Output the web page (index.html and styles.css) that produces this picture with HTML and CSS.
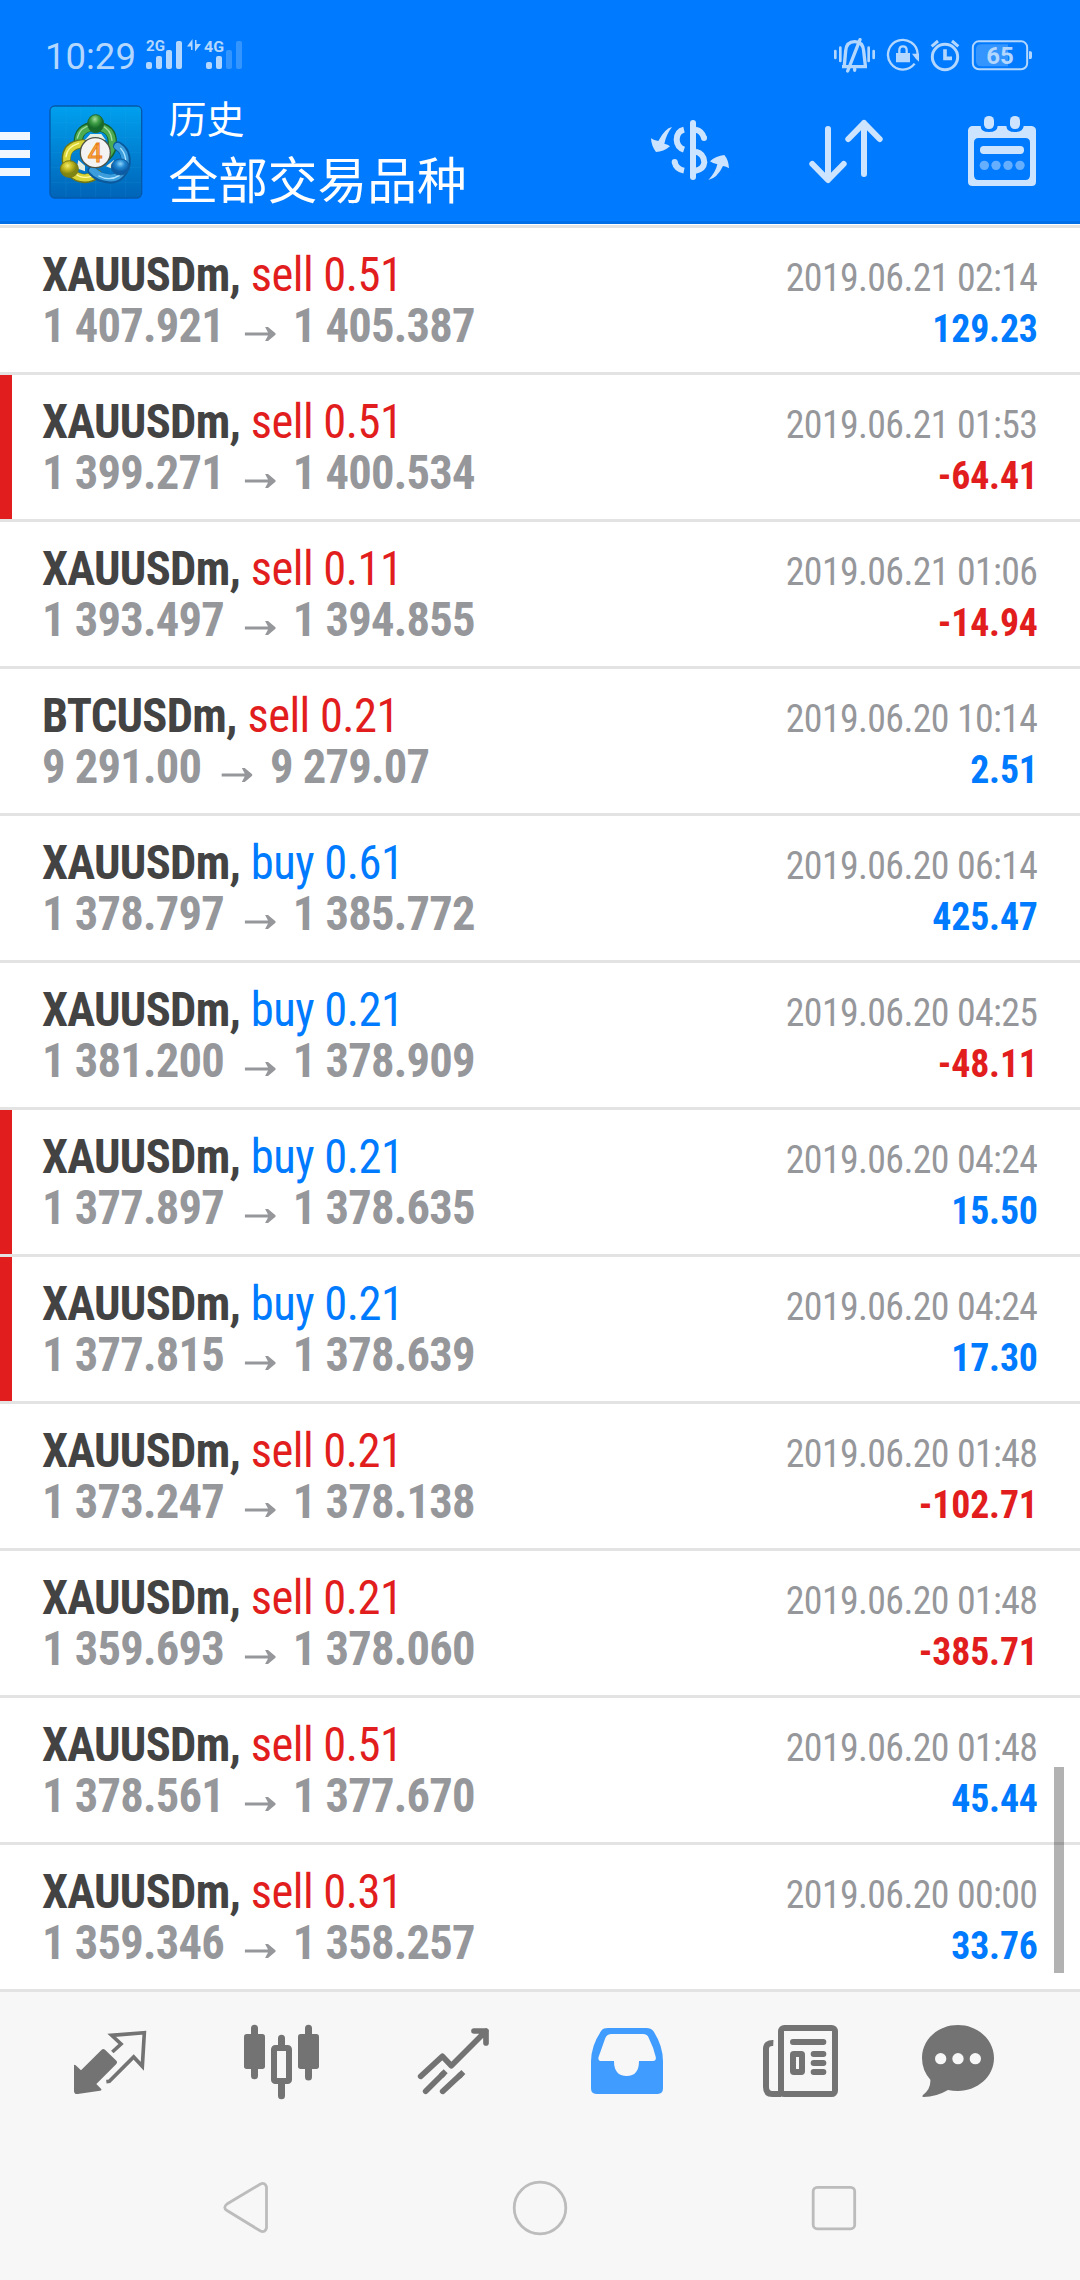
FILE: index.html
```html
<!DOCTYPE html>
<html lang="zh-CN">
<head>
<meta charset="utf-8">
<title>历史</title>
<link rel="stylesheet" href="styles.css">
</head>
<body>
<header class="header">
  <div class="status">
    <span class="clock">10:29</span>
    <svg class="signal" width="100" height="34" viewBox="144 38 100 34">
      <g fill="#b3d7ff">
        <text class="net" x="146" y="51" textLength="19" lengthAdjust="spacingAndGlyphs">2G</text>
        <text class="net" x="204" y="52" textLength="20" lengthAdjust="spacingAndGlyphs">4G</text>
        <rect x="146" y="62" width="6" height="7" rx="2"/><rect x="156" y="56" width="6" height="13" rx="2"/>
        <rect x="166" y="50" width="6" height="19" rx="2"/><rect x="176" y="41" width="6" height="28" rx="2"/>
        <path d="M187 46.500L192.500 39V50H191V46.500zM195 40H196.500V44H201L195 51.500z"/>
        <rect x="206" y="62" width="6" height="7" rx="2"/><rect x="216" y="56" width="6" height="13" rx="2"/>
      </g>
      <g fill="#3595ff"><rect x="226" y="50" width="6" height="19" rx="2"/><rect x="236" y="41" width="6" height="28" rx="2"/></g>
    </svg>
    <svg class="tray" width="200" height="36" viewBox="699 50 600 108">
      <g fill="none" stroke="#b3d7ff" stroke-width="8" stroke-linecap="round">
        <path d="M706 92v21M721 82v40M806 82v40M821 92v21"/>
        <path d="M726 139H801M733 136L737 92Q739 64 764 64Q789 64 791 92L796 136" stroke-width="10" stroke-linecap="butt"/>
        <path d="M780 58L743 152M764 145v5" stroke-width="10"/>
        <path d="M944 130A44.500 44.500 0 1 1 953 102" stroke-width="7" stroke-linecap="butt"/>
        <path d="M898 102V90Q898 78 909 78Q920 78 920 90V102" stroke-width="7"/>
        <circle cx="1035" cy="110" r="38" stroke-width="9"/>
        <path d="M1035 87V114H1056" stroke-width="11" stroke-linecap="butt"/>
        <path d="M995 78L1014 62M1075 78L1056 62" stroke-width="9" stroke-linecap="butt"/>
        <rect x="1118.500" y="63" width="163" height="84" rx="18" stroke-width="6"/>
      </g>
      <path d="M888 98H930V126H888zM936 100H957V124L948 116z" fill="#b3d7ff"/>
      <path d="M1144 72H1224V138H1144Q1128 138 1128 122V88Q1128 72 1144 72z" fill="#3595ff"/>
      <path d="M1287 93h5q4 0 4 5v12q0 6 -4 6h-5z" fill="#b3d7ff"/>
      <text class="battery" x="1159" y="132" textLength="82">65</text>
    </svg>
  </div>
  <div class="toolbar">
    <svg class="menu" width="30" height="44" viewBox="0 0 30 44"><path d="M0 0H30V8H0zM0 18H30V26H0zM0 36H30V44H0z" fill="#f0f7ff"/></svg>
    <svg class="logo" width="94" height="94" viewBox="57 45 282 282">
      <defs>
        <linearGradient id="tile" x1="0" y1="0" x2="0" y2="1"><stop offset="0" stop-color="#00a0ef"/><stop offset="1" stop-color="#0064b8"/></linearGradient>
        <radialGradient id="green" cx=".45" cy=".25"><stop offset="0" stop-color="#a5dda0"/><stop offset=".5" stop-color="#3fa047"/><stop offset="1" stop-color="#166b2a"/></radialGradient>
        <radialGradient id="gold" cx=".4" cy=".3"><stop offset="0" stop-color="#f3ee70"/><stop offset=".5" stop-color="#c4b920"/><stop offset="1" stop-color="#7e8513"/></radialGradient>
        <radialGradient id="azure" cx=".5" cy=".3"><stop offset="0" stop-color="#8ed4fa"/><stop offset=".5" stop-color="#2388d2"/><stop offset="1" stop-color="#0b5ba5"/></radialGradient>
      </defs>
      <rect x="60" y="48" width="275" height="276" rx="14" fill="url(#tile)" stroke="#0559a9" stroke-width="4"/>
      <path d="M108 50V322M152 50V322M197 50V322M242 50V322M287 50V322M62 98H333M62 142H333M62 187H333M62 232H333M62 277H333" stroke="#42b5ee" stroke-opacity=".17" stroke-width="2"/>
      <g fill="none" stroke-linecap="round">
        <path d="M145 160Q143 112 195 108Q249 112 247 159Q248 184 230 199" stroke="#17652b" stroke-width="28"/>
        <path d="M145 158Q144 114 195 110Q247 112 247 159Q247 182 230 197" stroke="#4caa50" stroke-width="21"/>
        <path d="M142 144Q151 109 186 106M213 106Q243 117 246 151" stroke="#a4dba0" stroke-width="4"/>
        <path d="M159 162Q105 164 109 213Q118 262 164 266Q184 264 202 252" stroke="#6e7616" stroke-width="28"/>
        <path d="M159 161Q107 166 110 213Q119 261 164 264Q184 263 200 252" stroke="#d9d435" stroke-width="21"/>
        <path d="M146 160Q111 170 108 200M132 248Q156 269 184 259" stroke="#fffaa0" stroke-width="4"/>
        <path d="M263 168Q291 182 288 222Q276 266 241 267Q205 265 186 242" stroke="#0a599d" stroke-width="28"/>
        <path d="M263 169Q288 184 286 222Q274 264 241 264Q205 261 188 241" stroke="#3b9ddb" stroke-width="21"/>
        <path d="M272 175Q290 196 286 216M207 258Q238 275 269 256" stroke="#afe4ff" stroke-width="4"/>
      </g>
      <path d="M181 132H214L227 150H165zM145 210L165 227V244L140 235zM228 229L252 210L256 240z" fill="#e5eee2"/>
      <ellipse cx="197" cy="101" rx="24" ry="27" fill="url(#green)" stroke="#25672c" stroke-width="3"/>
      <ellipse cx="118" cy="237" rx="27" ry="25" fill="url(#gold)" stroke="#78791a" stroke-width="3"/>
      <ellipse cx="271" cy="231" rx="27" ry="24" fill="url(#azure)" stroke="#155d9b" stroke-width="3"/>
      <circle cx="196" cy="188" r="45" fill="#f3f3f3" stroke="#4c5447" stroke-width="4"/>
      <text class="four" x="195" y="215">4</text>
    </svg>
    <div class="titles">
      <div class="title">历史</div>
      <div class="subtitle">全部交易品种</div>
    </div>
    <div class="actions">
      <svg width="80" height="80" viewBox="150 270 240 240" fill="#cce4ff">
        <path d="M216 321Q195 325 175 363Q162 362 153 355Q154 378 168 396Q190 396 210 379Q204 373 193 371Q199 343 216 321zM325 480Q347 457 352 433Q341 432 330 424Q348 407 373 405Q386 420 387 445Q379 439 369 438Q352 474 325 480z"/>
        <path d="M279 309V471" stroke="#cce4ff" stroke-width="18" stroke-linecap="round"/>
        <path d="M252 329Q231 334 230 359Q231 382 252 389M224 426Q228 447 252 452M287 329Q306 333 312 354M287 395Q312 401 313 427Q311 448 287 452" fill="none" stroke="#cce4ff" stroke-width="18"/>
        <circle cx="224" cy="426" r="9"/><circle cx="312" cy="354" r="9"/>
      </svg>
      <svg width="80" height="80" viewBox="618 270 240 240" fill="none" stroke="#cce4ff" stroke-width="18" stroke-linecap="round" stroke-linejoin="round">
        <path d="M684 327V479M637 432L684 480L731 432M792 462V309M745 357L792 309L839 357"/>
      </svg>
      <svg width="80" height="80" viewBox="1086 270 240 240">
        <path fill="#cce4ff" fill-rule="evenodd" d="M1116 318H1142Q1142 336 1167 336Q1192 336 1193 318H1219Q1220 336 1244 336Q1270 336 1271 318H1295Q1308 320 1308 331V485Q1308 498 1295 498H1118Q1104 498 1104 485V331Q1105 320 1116 318zM1136 354Q1122 354 1122 368V465Q1122 480 1136 480H1276Q1290 480 1290 465V368Q1290 354 1276 354z"/>
        <g fill="#cce4ff"><rect x="1152" y="288" width="30" height="39" rx="14"/><rect x="1230" y="288" width="30" height="39" rx="14"/><rect x="1140" y="378" width="132" height="24" rx="11"/></g>
        <g fill="#66afff"><circle cx="1153" cy="436" r="14"/><circle cx="1188" cy="436" r="14"/><circle cx="1224" cy="436" r="14"/><circle cx="1260" cy="436" r="14"/></g>
      </svg>
    </div>
  </div>
</header>
<main class="list" id="list"></main>
<nav class="tabs">
  <svg viewBox="90 120 240 240" fill="#737373">
    <path d="M102 257Q102 252 107 256L123 271L185 209Q190 205 195 209L230 243Q233 248 229 252L169 312L183 326Q187 331 180 332L113 342Q102 343 102 332z"/>
    <path d="M217 216L243 192L215 166L313 158L307 259L281 231L208 304L199 305" fill="none" stroke="#737373" stroke-width="11"/>
  </svg>
  <svg viewBox="606 120 240 240" fill="#737373">
    <path d="M643.500 145V287M805.500 145V291M724.500 175V200M724.500 305V347" stroke="#737373" stroke-width="21" stroke-linecap="round"/>
    <rect x="612" y="162" width="63" height="105" rx="8"/><rect x="774" y="162" width="63" height="105" rx="8"/>
    <rect x="702" y="204" width="45" height="99" rx="4" fill="#f7f7f7" stroke="#737373" stroke-width="18"/>
  </svg>
  <svg viewBox="1122 120 240 240" fill="none" stroke="#737373" stroke-width="17" stroke-linecap="round" stroke-linejoin="round">
    <path d="M1142 289L1207 229L1234 257L1338 153M1302 153H1338V189"/>
    <path d="M1157 334L1209 282M1208 334L1262 284"/>
    <path d="M1209 282l2 -2M1262 284l2 -2" stroke-linecap="square"/>
  </svg>
  <svg viewBox="138 120 240 240">
    <path fill="#409cff" fill-rule="evenodd" d="M204 144H319Q333 144 340 153Q369 197 369 244V325Q369 342 353 342H169Q153 342 153 325V244Q154 194 185 151Q190 144 204 144zM215 162Q201 162 196 174L176 230Q172 243 185 243H222Q222 288 260 288Q297 288 297 243H339Q350 242 347 230Q341 203 326 173Q322 162 309 162z"/>
  </svg>
  <svg viewBox="654 120 240 240" fill="none" stroke="#737373" stroke-width="18">
    <rect x="723" y="144" width="162" height="198" rx="10"/>
    <path d="M700 189Q678 188 678 207V321Q678 342 697 342H724"/>
    <path d="M759 186H850M821 222H850M821 249H850M821 276H850" stroke-linecap="round"/>
    <rect x="759" y="222" width="27" height="54" rx="2"/>
  </svg>
  <svg class="chat" viewBox="1128 120 240 240">
    <path fill="#737373" d="M1254 135C1312 135 1362 178 1362 234S1312 333 1254 333Q1238 333 1224 330Q1188 351 1151 351Q1144 350 1149 345Q1173 327 1171 299Q1146 271 1146 234C1146 178 1194 135 1254 135z"/>
    <g fill="#f7f7f7"><circle cx="1202" cy="236" r="17"/><circle cx="1254" cy="236" r="17"/><circle cx="1306" cy="236" r="17"/></g>
  </svg>
</nav>
<footer class="sysnav">
  <svg viewBox="216 2178 60 60"><path d="M266.500 2187V2228Q265 2233 260.500 2231L227 2210.500Q222.500 2207.500 227 2204L260.500 2184Q265 2182 266.500 2187z"/></svg>
  <svg viewBox="510 2178 60 60"><circle cx="540" cy="2208" r="25.800"/></svg>
  <svg viewBox="804 2178 60 60"><rect x="813.200" y="2187.300" width="41.500" height="41.500" rx="4"/></svg>
</footer>
<script src="app.js"></script>
</body>
</html>
```
FILE: styles.css
```css
* { box-sizing: border-box; }

body {
  margin: 0;
  width: 1080px;
  height: 2280px;
  display: flex;
  flex-direction: column;
  background: #f7f7f7;
  font-family: "Roboto Condensed", Roboto, "Noto Sans CJK SC", sans-serif;
  overflow: hidden;
}

svg { display: block; flex: none; }

.header {
  height: 224px;
  background: #007aff;
  border-bottom: 3px solid #006ee6;
}

.status {
  height: 96px;
  padding: 38px 47px 0 45px;
  display: flex;
  align-items: flex-start;
}

.clock {
  width: 99px;
  padding-top: 1px;
  font: 450 36.500px/36px Roboto, sans-serif;
  color: #b3d7ff;
}

.tray { margin-left: auto; margin-top: -1px; }
.net { font: bold 15px Roboto, sans-serif; }
.battery { font: bold 72px Roboto, sans-serif; fill: #b3d7ff; }

.toolbar {
  height: 125px;
  display: flex;
  align-items: flex-start;
  padding-right: 38px;
}

.menu { margin-top: 36px; }
.logo { margin: 9px 0 0 19px; }
.four { font: 78px Roboto, sans-serif; fill: #ffb04a; stroke: #e8801c; stroke-width: 3; text-anchor: middle; }

.titles {
  margin: -3px 0 0 25.500px;
  color: #fff;
  font-family: "Noto Sans CJK SC", sans-serif;
  font-weight: 400;
  white-space: nowrap;
}

.title { font-size: 38px; line-height: 48px; }
.subtitle { font-size: 49.700px; line-height: 72px; }

.actions { display: flex; gap: 76px; margin: 14px 0 0 auto; }

.list {
  height: 1767px;
  border-top: 3px solid #e3e3e3;
  margin-top: 1px;
  box-shadow: 0 -1px #fff;
  background: #fff;
  position: relative;
}

.list::after {
  content: "";
  position: absolute;
  right: 16px;
  top: 1539px;
  width: 10px;
  height: 206px;
  background: rgba(0, 0, 0, .3);
}

.deal {
  height: 147px;
  padding: 21px 42px 0 41.500px;
  border-bottom: 3px solid #e3e3e3;
  display: flex;
  justify-content: space-between;
  font-size: 48px;
  line-height: 51px;
  font-stretch: 75%;
  white-space: nowrap;
}

.deal.flagged { box-shadow: inset 12px 0 #e21d1d; }
.main { transform: scaleX(.97); transform-origin: left; }
.name { color: #434343; font-weight: 700; letter-spacing: -.750px; }
.sell, .buy { letter-spacing: -.550px; }
.sell, .loss { color: #e21d1d; }
.buy, .gain { color: #007aff; }
.prices { display: flex; font-weight: 700; letter-spacing: -.800px; color: #96979b; }
.arrow { margin: 27px 18px 0 21px; }
.side {
  text-align: right;
  font-size: 39px;
  color: #96979b;
  padding-top: 4px;
  transform: scaleX(.97);
  transform-origin: right;
}
.time { letter-spacing: -.650px; padding-right: .500px; }
.profit { font-weight: 700; letter-spacing: -.200px; }

.tabs {
  height: 148px;
  padding: 28px 70px 0;
  display: flex;
  gap: 92px;
}
.tabs svg { width: 80px; height: 80px; }
.tabs .chat { margin-left: -14px; }

.sysnav {
  flex: 1;
  display: flex;
  justify-content: center;
  gap: 234px;
  padding-top: 38px;
}
.sysnav svg { width: 60px; height: 60px; fill: none; stroke: #bcbcbc; stroke-width: 2.800; }
```
FILE: app.js
```js
const deals = [
  ["XAUUSDm", "sell", "0.51", "1 407.921", "1 405.387", "2019.06.21 02:14", "129.23"],
  ["XAUUSDm", "sell", "0.51", "1 399.271", "1 400.534", "2019.06.21 01:53", "-64.41", true],
  ["XAUUSDm", "sell", "0.11", "1 393.497", "1 394.855", "2019.06.21 01:06", "-14.94"],
  ["BTCUSDm", "sell", "0.21", "9 291.00", "9 279.07", "2019.06.20 10:14", "2.51"],
  ["XAUUSDm", "buy", "0.61", "1 378.797", "1 385.772", "2019.06.20 06:14", "425.47"],
  ["XAUUSDm", "buy", "0.21", "1 381.200", "1 378.909", "2019.06.20 04:25", "-48.11"],
  ["XAUUSDm", "buy", "0.21", "1 377.897", "1 378.635", "2019.06.20 04:24", "15.50", true],
  ["XAUUSDm", "buy", "0.21", "1 377.815", "1 378.639", "2019.06.20 04:24", "17.30", true],
  ["XAUUSDm", "sell", "0.21", "1 373.247", "1 378.138", "2019.06.20 01:48", "-102.71"],
  ["XAUUSDm", "sell", "0.21", "1 359.693", "1 378.060", "2019.06.20 01:48", "-385.71"],
  ["XAUUSDm", "sell", "0.51", "1 378.561", "1 377.670", "2019.06.20 01:48", "45.44"],
  ["XAUUSDm", "sell", "0.31", "1 359.346", "1 358.257", "2019.06.20 00:00", "33.76"],
];

const arrow = '<svg class="arrow" width="32" height="14" viewBox="0 0 32 14"><path d="M0 5.500H24L21 0H24L32 6.500V7.500L24 14H21L24 8.500H0z" fill="#96979b"/></svg>';

document.getElementById("list").innerHTML = deals.map(([symbol, side, lots, open, close, time, profit, flagged]) => `
  <article class="deal${flagged ? " flagged" : ""}">
    <div class="main">
      <div><span class="name">${symbol},</span> <span class="${side}">${side} ${lots}</span></div>
      <div class="prices"><span>${open}</span>${arrow}<span>${close}</span></div>
    </div>
    <div class="side">
      <div class="time">${time}</div>
      <div class="profit ${profit[0] === "-" ? "loss" : "gain"}">${profit}</div>
    </div>
  </article>`).join("");
```
